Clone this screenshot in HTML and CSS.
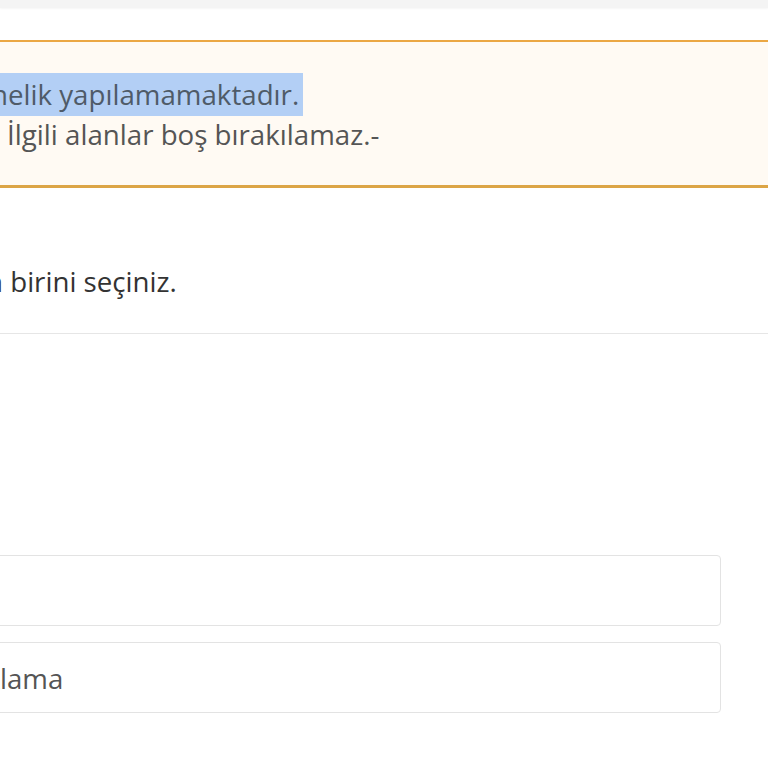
FILE: index.html
```html
<!DOCTYPE html>
<html lang="tr">
<head>
<meta charset="utf-8">
<title>Üyelik</title>
<link rel="stylesheet" href="styles.css">
</head>
<body>
<div class="topbar"></div>
<div class="page">
  <div class="alert">
    <div class="line"><mark class="sel"><span class="pre">-Bu işleme yö</span>nelik yapılamamaktadır. </mark></div>
    <div class="line">- İlgili alanlar boş bırakılamaz.-</div>
  </div>
  <div class="question"><span class="pre">Aşağıdakilerden</span> birini seçiniz.</div>
  <div class="divider"></div>
  <div class="fields">
    <div class="field"></div>
    <div class="field"><span class="pre">Açık</span>lama</div>
  </div>
</div>
</body>
</html>
```

FILE: styles.css
```css
html, body {
  margin: 0;
  padding: 0;
  background: #ffffff;
  overflow: hidden;
}
body {
  font-family: "Open Sans", "Noto Sans", sans-serif;
  font-size: 27.7px;
  color: #555555;
}
.topbar {
  height: 8px;
  background: #f4f4f4;
  box-shadow: 0 1px 2px rgba(0,0,0,0.04);
}
.page {
  display: flex;
  flex-direction: column;
  margin-left: -60px;
  margin-right: -30px;
  padding-top: 32px;
}
.alert {
  background: #fffaf3;
  border-top: 2px solid #eba744;
  border-bottom: 3px solid #dca546;
  padding: 32px 0 31px 51px;
}
.line {
  line-height: 40px;
  white-space: nowrap;
}
.sel {
  background: #b3cff5;
  color: #4f5b68;
  padding: 2px 4px 3px 0;
}
.pre {
  display: inline-flex;
  width: 0;
  justify-content: flex-end;
  white-space: pre;
}
.question {
  margin-top: 73px;
  padding-left: 63px;
  line-height: 40px;
  color: #333333;
  white-space: nowrap;
}
.divider {
  margin-top: 32px;
  height: 1px;
  background: #e6e6e6;
}
.fields {
  display: flex;
  flex-direction: column;
  gap: 16px;
  margin-top: 221px;
  margin-right: 77px;
  margin-left: 40px;
}
.field {
  height: 69px;
  border: 1px solid #e3e3e3;
  border-radius: 4px;
  display: flex;
  align-items: center;
  padding-left: 19px;
  color: #555555;
  white-space: nowrap;
}
```
